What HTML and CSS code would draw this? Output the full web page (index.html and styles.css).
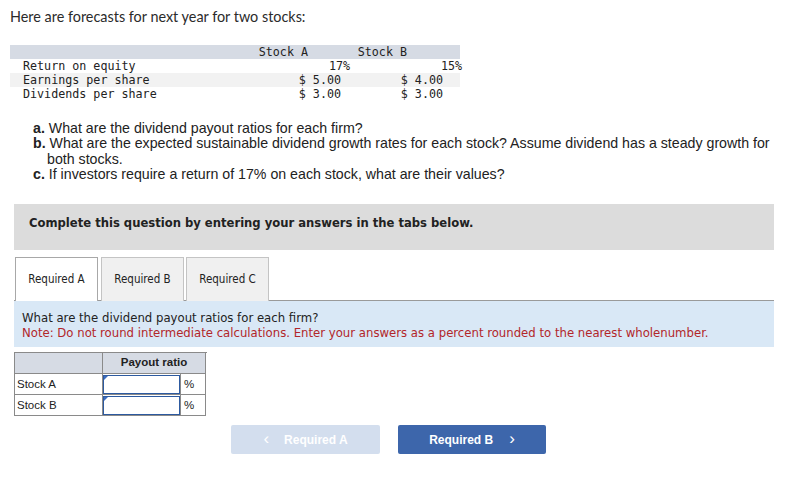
FILE: index.html
```html
<!DOCTYPE html>
<html>
<head>
<meta charset="utf-8">
<link rel="stylesheet" href="styles.css">
</head>
<body>
<p class="lead">Here are forecasts for next year for two stocks:</p>

<div class="data">
  <div class="drow dhead">
    <span class="lbl"></span>
    <span class="ca h">Stock A</span>
    <span class="cb h">Stock B</span>
  </div>
  <div class="drow">
    <span class="lbl">Return on equity</span>
    <span class="ca p">17%</span>
    <span class="cb p">15%</span>
  </div>
  <div class="drow alt">
    <span class="lbl">Earnings per share</span>
    <span class="ca d">$ 5.00</span>
    <span class="cb d">$ 4.00</span>
  </div>
  <div class="drow">
    <span class="lbl">Dividends per share</span>
    <span class="ca d">$ 3.00</span>
    <span class="cb d">$ 3.00</span>
  </div>
</div>

<ol class="questions">
  <li><b>a.</b> What are the dividend payout ratios for each firm?</li>
  <li><b>b.</b> What are the expected sustainable dividend growth rates for each stock? Assume dividend has a steady growth for both stocks.</li>
  <li><b>c.</b> If investors require a return of 17% on each stock, what are their values?</li>
</ol>

<div class="banner">Complete this question by entering your answers in the tabs below.</div>

<div class="tabs">
  <div class="tab active">Required A</div>
  <div class="tab">Required B</div>
  <div class="tab">Required C</div>
</div>

<div class="panel">
  <div>What are the dividend payout ratios for each firm?</div>
  <div class="note">Note: Do not round intermediate calculations. Enter your answers as a percent rounded to the nearest wholenumber.</div>
</div>

<div class="answers">
  <div class="ac ah"></div>
  <div class="ac ah ahl">Payout ratio</div>
  <div class="ac">Stock A</div>
  <div class="ac inp"><span class="field"></span></div>
  <div class="ac pct">%</div>
  <div class="ac">Stock B</div>
  <div class="ac inp"><span class="field"></span></div>
  <div class="ac pct">%</div>
</div>

<div class="nav">
  <div class="btn disabled"><span class="chev">&lsaquo;</span>Required A</div>
  <div class="btn primary">Required B<span class="chev r">&rsaquo;</span></div>
</div>
</body>
</html>
```
FILE: styles.css
```css
html, body {
  margin: 0;
  padding: 0;
  background: #fff;
}
body {
  width: 791px;
  height: 479px;
  overflow: hidden;
  color: #222;
  font-family: "Liberation Sans", Arial, sans-serif;
}
.lead {
  margin: 0;
  padding: 8px 0 0 10px;
  font-family: Lato, "Liberation Sans", sans-serif;
  font-size: 14.4px;
  line-height: 18px;
  color: #2b2b2b;
}
.data {
  margin: 19px 0 0 10px;
  width: 450px;
  font-family: "DejaVu Sans Mono", monospace;
  font-size: 11.7px;
  color: #222;
}
.drow {
  display: grid;
  grid-template-columns: 230px 112px 110px;
  height: 14px;
  line-height: 14px;
  white-space: pre;
}
.dhead {
  background: #d6dbe4;
  height: 14px;
  line-height: 14px;
}
.alt {
  background: #f2f2f2;
}
.lbl {
  padding-left: 13px;
}
.ca, .cb {
  text-align: right;
}
.ca.h { padding-right: 44px; }
.cb.h { padding-right: 55px; }
.ca.p { padding-right: 2px; }
.cb.p { padding-right: 0; }
.ca.d { padding-right: 11px; }
.cb.d { padding-right: 19px; }

.questions {
  list-style: none;
  margin: 20px 0 0 33px;
  padding: 0;
  width: 745px;
  font-family: "Liberation Sans", Arial, sans-serif;
  font-size: 14.2px;
  line-height: 15.3px;
  color: #222;
}
.questions li {
  padding-left: 14px;
  text-indent: -14px;
}
.banner {
  margin: 22px 17px 0 14px;
  height: 46px;
  box-sizing: border-box;
  padding: 11px 0 0 15px;
  background: #dcdcdc;
  font-family: "DejaVu Sans", Verdana, sans-serif;
  font-stretch: condensed;
  font-weight: bold;
  font-size: 12.9px;
  line-height: 15px;
  color: #222;
}
.tabs {
  display: flex;
  gap: 2px;
  margin: 7px 17px 0 14px;
  border-bottom: 1px solid #9a9a9a;
  padding-left: 1px;
  height: 43px;
}
.tab {
  width: 83px;
  box-sizing: border-box;
  height: 44px;
  border: 1px solid #c4c4c4;
  border-bottom: none;
  background: #f0f0f0;
  font-family: "DejaVu Sans", Verdana, sans-serif;
  font-stretch: condensed;
  font-size: 11.5px;
  line-height: 42px;
  text-align: center;
  color: #222;
}
.tab.active {
  background: #fff;
  border-color: #a8a8a8;
  width: 83px;
  margin-right: 1px;
}
.panel {
  margin: 0 17px 0 14px;
  height: 46px;
  box-sizing: border-box;
  padding: 9px 0 0 8px;
  background: #d9e8f6;
  font-family: "DejaVu Sans", Verdana, sans-serif;
  font-stretch: condensed;
  font-size: 13px;
  line-height: 15px;
  color: #222;
}
.note {
  color: #b2262a;
}
.answers {
  display: grid;
  grid-template-columns: 88px 78px 25px;
  grid-template-rows: 21px 21px 21px;
  width: 193px;
  margin: 5px 0 0 14px;
  border-top: 1px solid #8a8a8a;
  border-left: 1px solid #8a8a8a;
  box-sizing: border-box;
  font-family: "Liberation Sans", Arial, sans-serif;
  font-size: 11.5px;
  color: #222;
}
.ac {
  border-right: 1px solid #8a8a8a;
  border-bottom: 1px solid #8a8a8a;
  line-height: 20px;
  padding-left: 2px;
}
.ah {
  background: #d6dbe4;
}
.ahl {
  grid-column: span 2;
  text-align: center;
  font-weight: bold;
  padding-left: 0;
  line-height: 19px;
}
.inp {
  padding: 0;
  position: relative;
}
.field {
  display: block;
  margin: 1px 0;
  border: 1px solid #2d5aa0;
  background: #fff;
  box-sizing: border-box;
  height: 19px;
  position: relative;
}
.field::before {
  content: "";
  position: absolute;
  left: 0;
  top: 0;
  border-top: 4px solid #3b6cc0;
  border-right: 4px solid transparent;
  border-bottom: 3px solid transparent;
}
.pct {
  padding-left: 3px;
}
.nav {
  display: flex;
  gap: 18px;
  margin: 9px 0 0 231px;
}
.btn {
  width: 149px;
  height: 29px;
  border-radius: 2px;
  box-sizing: border-box;
  display: flex;
  align-items: center;
  justify-content: center;
  font-family: "Liberation Sans", Arial, sans-serif;
  font-weight: bold;
  font-size: 12px;
  color: #fff;
}
.btn.disabled {
  background: #d3deee;
}
.btn.primary {
  width: 148px;
  background: #3d66ab;
}
.chev {
  font-size: 17px;
  font-weight: normal;
  margin-right: 15px;
  line-height: 20px;
  position: relative;
  top: -1px;
}
.chev.r {
  margin-right: 0;
  margin-left: 16px;
}
```
